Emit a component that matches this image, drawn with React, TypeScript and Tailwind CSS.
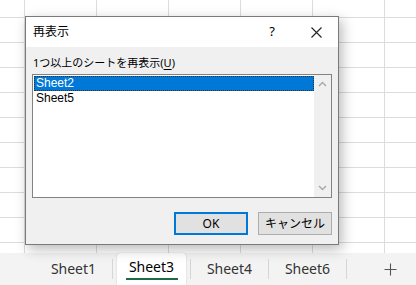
import React from 'react';

const sheets = [
  { name: 'Sheet1', active: false },
  { name: 'Sheet3', active: true },
  { name: 'Sheet4', active: false },
  { name: 'Sheet6', active: false },
];

const hidden = ['Sheet2', 'Sheet5'];

const uiFont = "font-['Noto_Sans','Noto_Sans_CJK_JP',sans-serif]";

const Chevron = ({ up }: { up?: boolean }) => (
  <svg width="9" height="6" viewBox="0 0 9 6" className="block">
    <path
      d={up ? 'M1 5 L4.5 1.5 L8 5' : 'M1 1 L4.5 4.5 L8 1'}
      fill="none"
      stroke="#a8a8a8"
      strokeWidth="1.4"
    />
  </svg>
);

const App = () => {
  return (
    <div className={`relative w-[416px] h-[285px] flex flex-col overflow-hidden bg-white ${uiFont}`}>
      {/* Worksheet grid */}
      <div className="flex-1 bg-white bg-[linear-gradient(to_right,#dcdcdc_1px,transparent_1px),linear-gradient(to_bottom,#dcdcdc_1px,transparent_1px)] bg-[size:72px_25px] bg-[position:24px_17px]" />

      {/* Sheet tabs */}
      <div className="h-[32px] bg-[#f3f3f3] flex items-stretch pl-[35px] text-[14px] text-[#333]">
        {sheets.map((s) => (
          <div key={s.name} className="flex items-stretch">
            <div className="w-[77px] flex justify-center px-[4px]">
              {s.active ? (
                <div className="w-full bg-white rounded-t-[4px] shadow-[0_0_2px_rgba(0,0,0,0.18)] flex flex-col items-center pt-[4px]">
                  <span className="leading-[20px] text-black">{s.name}</span>
                  <span className="mt-[1px] h-[2px] w-[52px] bg-[#1e6b41]" />
                </div>
              ) : (
                <span className="leading-[20px] pt-[6px]">{s.name}</span>
              )}
            </div>
            <div className="w-px bg-[#d6d6d6] my-[6px]" />
          </div>
        ))}
        <div className="flex-1 flex items-center justify-center pl-[18px]">
          <svg width="13" height="13" viewBox="0 0 13 13">
            <path d="M6.5 0.5 V12.5 M0.5 6.5 H12.5" stroke="#555" strokeWidth="1.1" />
          </svg>
        </div>
      </div>

      {/* Unhide dialog */}
      <div className="absolute left-[25px] top-[16px] w-[314px] h-[229px] border border-[#7a7a7a] bg-[#f0f0f0] shadow-[3px_4px_12px_rgba(0,0,0,0.28)] flex flex-col">
        <div className="h-[30px] bg-white flex items-center pl-[7px] text-[12px] text-black">
          <span className="flex-1">再表示</span>
          <span className="w-[20px] text-center text-[13px]">?</span>
          <div className="w-[56px] flex justify-center pl-[12px]">
            <svg width="11" height="11" viewBox="0 0 11 11">
              <path d="M0.5 0.5 L10.5 10.5 M10.5 0.5 L0.5 10.5" stroke="#222" strokeWidth="1.1" />
            </svg>
          </div>
        </div>

        <div className="flex-1 flex flex-col px-[6px] pt-[8px] pb-[9px]">
          <div className="text-[11px] leading-[16px] text-black pl-[1px]">
            1つ以上のシートを再表示(<span className="underline underline-offset-2">U</span>)
          </div>

          <div className="mt-[3px] h-[124px] border border-[#828282] bg-white flex">
            <div className="flex-1 pt-[1px] pl-[1px] text-[12px] leading-[15px] font-['Liberation_Sans',Arial,sans-serif]">
              {hidden.map((name, i) => (
                <div
                  key={name}
                  className={
                    i === 0
                      ? 'h-[15px] bg-[#0078d7] text-white pl-[2px] outline-1 outline-dotted outline-[#333] -outline-offset-1'
                      : 'h-[15px] text-black pl-[2px]'
                  }
                >
                  {name}
                </div>
              ))}
            </div>
            <div className="w-[17px] bg-[#f0f0f0] flex flex-col items-center justify-between py-[6px]">
              <Chevron up />
              <Chevron />
            </div>
          </div>

          <div className="mt-[14px] flex justify-end gap-[10px] text-[12px] text-black">
            <button className="w-[74px] h-[23px] bg-[#e1e1e1] border-2 border-[#0078d7]">OK</button>
            <button className="w-[74px] h-[23px] bg-[#e1e1e1] border border-[#adadad]">キャンセル</button>
          </div>
        </div>
      </div>
    </div>
  );
};

export default App;
